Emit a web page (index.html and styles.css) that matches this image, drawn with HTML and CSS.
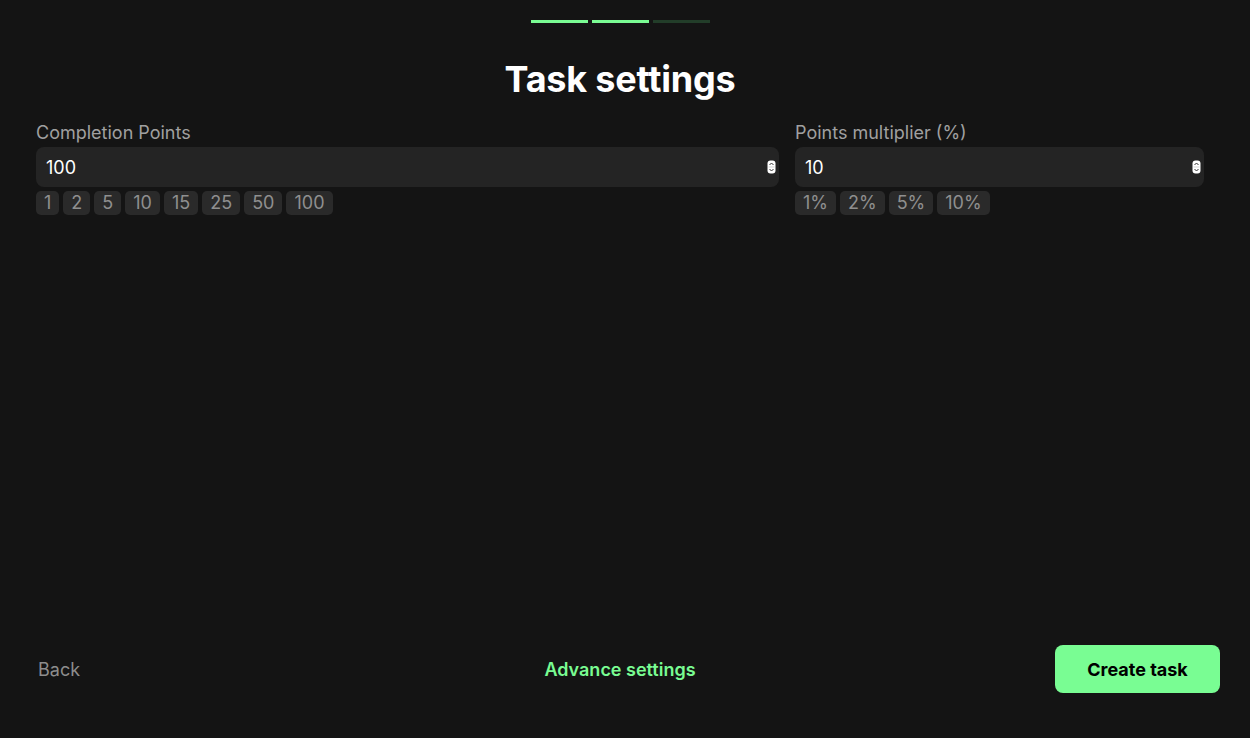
FILE: index.html
```html
<!DOCTYPE html>
<html lang="en">
<head>
<meta charset="utf-8">
<title>Task settings</title>
<link rel="stylesheet" href="styles.css">
</head>
<body>
<div class="page">
  <div class="progress">
    <span class="step done"></span>
    <span class="step done"></span>
    <span class="step"></span>
  </div>
  <h1 class="title">Task settings</h1>
  <div class="fields">
    <div class="field">
      <label class="label">Completion Points</label>
      <div class="input">
        <span class="value">100</span>
        <svg class="spin" width="9" height="14" viewBox="0 0 9 14"><rect x="0.5" y="0.5" width="8" height="13" rx="3" fill="#fff"/><path d="M2.5 5 L4.5 3 L6.5 5" fill="none" stroke="#333" stroke-width="1"/><path d="M2.5 9 L4.5 11 L6.5 9" fill="none" stroke="#333" stroke-width="1"/><line x1="1.5" y1="7" x2="7.5" y2="7" stroke="#bbb" stroke-width="0.6"/></svg>
      </div>
      <div class="chips">
        <span class="chip">1</span><span class="chip">2</span><span class="chip">5</span><span class="chip">10</span><span class="chip">15</span><span class="chip">25</span><span class="chip">50</span><span class="chip">100</span>
      </div>
    </div>
    <div class="field">
      <label class="label">Points multiplier (%)</label>
      <div class="input">
        <span class="value">10</span>
        <svg class="spin" width="9" height="14" viewBox="0 0 9 14"><rect x="0.5" y="0.5" width="8" height="13" rx="3" fill="#fff"/><path d="M2.5 5 L4.5 3 L6.5 5" fill="none" stroke="#333" stroke-width="1"/><path d="M2.5 9 L4.5 11 L6.5 9" fill="none" stroke="#333" stroke-width="1"/><line x1="1.5" y1="7" x2="7.5" y2="7" stroke="#bbb" stroke-width="0.6"/></svg>
      </div>
      <div class="chips">
        <span class="chip">1%</span><span class="chip">2%</span><span class="chip">5%</span><span class="chip">10%</span>
      </div>
    </div>
  </div>
  <div class="spacer"></div>
  <div class="footer">
    <div class="left"><button class="back">Back</button></div>
    <button class="advance">Advance settings</button>
    <div class="right"><button class="create">Create task</button></div>
  </div>
</div>
</body>
</html>
```
FILE: styles.css
```css
* { box-sizing: border-box; }
html, body {
  margin: 0;
  height: 100%;
  background: #141414;
  font-family: Inter, "Noto Sans", sans-serif;
  color: #fff;
}
.page {
  width: 1240px;
  height: 100vh;
  display: flex;
  flex-direction: column;
  padding: 20px 0 45px;
}
.progress {
  display: flex;
  justify-content: center;
  gap: 4px;
}
.step {
  width: 57px;
  height: 3px;
  background: #223d29;
}
.step.done { background: #7afc93; }
.title {
  margin: 31px 0 0;
  text-align: center;
  font-size: 36px;
  font-weight: 700;
  line-height: 50px;
  letter-spacing: -0.2px;
}
.fields {
  display: grid;
  grid-template-columns: 743fr 409fr;
  gap: 16px;
  padding: 0 36px;
  margin-top: 17px;
}
.field { display: flex; flex-direction: column; }
.label {
  color: #a0a0a0;
  font-size: 18px;
  line-height: 24px;
  margin-bottom: 2px;
}
.input {
  height: 40px;
  background: #242424;
  border-radius: 8px;
  display: flex;
  align-items: center;
  justify-content: space-between;
  padding: 0 3px 0 10px;
}
.value { font-size: 18px; color: #fff; }
.spin { display: block; }
.chips {
  display: flex;
  gap: 4px;
  margin-top: 4px;
}
.chip {
  height: 24px;
  line-height: 24px;
  padding: 0 8px;
  background: #2a2a2a;
  border-radius: 5px;
  color: #8f8f8f;
  font-size: 18px;
}
.spacer { flex: 1; }
.footer {
  display: grid;
  grid-template-columns: 1fr auto 1fr;
  align-items: center;
  padding: 0 20px 0 30px;
}
.left { display: flex; justify-content: flex-start; }
.right { display: flex; justify-content: flex-end; }
.footer button {
  font-family: inherit;
  font-size: 18px;
  border: none;
  background: none;
  cursor: pointer;
}
.back {
  color: #8d8d8d;
  padding: 0 8px;
}
.advance {
  color: #79fc92;
  font-weight: 600;
  margin-left: -10px;
}
.create {
  background: #79fd93 !important;
  color: #000;
  font-weight: 700;
  height: 48px;
  width: 165px;
  border-radius: 8px;
}
```
